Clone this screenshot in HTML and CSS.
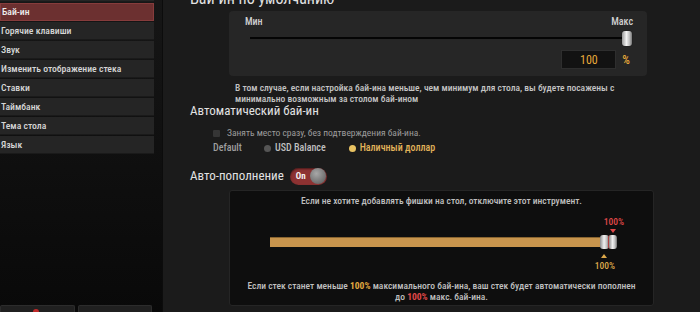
FILE: index.html
```html
<!DOCTYPE html>
<html lang="ru">
<head>
  <meta charset="UTF-8">
  <title>Настройки</title>
  <link rel="stylesheet" href="styles.css">
</head>
<body>

  <!-- Left menu -->
  <aside class="sidebar">
    <nav class="menu">
      <div class="menu-item"></div>
      <a href="#" class="menu-item active">Бай-ин</a>
      <a href="#" class="menu-item">Горячие клавиши</a>
      <a href="#" class="menu-item">Звук</a>
      <a href="#" class="menu-item">Изменить отображение стека</a>
      <a href="#" class="menu-item">Ставки</a>
      <a href="#" class="menu-item">Таймбанк</a>
      <a href="#" class="menu-item">Тема стола</a>
      <a href="#" class="menu-item">Язык</a>
    </nav>
    <div class="side-buttons">
      <button class="side-btn"><span class="dot"></span></button>
      <button class="side-btn"></button>
    </div>
  </aside>

  <!-- Settings content -->
  <main class="content">
    <h2 class="section-title first">Бай-ин по умолчанию</h2>

    <div class="card">
      <div class="range-labels">
        <span>Мин</span>
        <span>Макс</span>
      </div>
      <div class="track">
        <div class="thumb"></div>
      </div>
      <div class="value-row">
        <div class="value-box">100</div>
        <span class="percent">%</span>
      </div>
    </div>

    <p class="note">В том случае, если настройка бай-ина меньше, чем минимум для стола, вы будете посажены с<br>минимально возможным за столом бай-ином</p>

    <h2 class="section-title">Автоматический бай-ин</h2>

    <label class="check-row">
      <span class="checkbox"></span>
      Занять место сразу, без подтверждения бай-ина.
    </label>

    <div class="radio-row">
      <span class="radio-label">Default</span>
      <span class="radio"><span class="radio-dot"></span>USD Balance</span>
      <span class="radio selected"><span class="radio-dot"></span>Наличный доллар</span>
    </div>

    <div class="toggle-row">
      <h2 class="section-title">Авто-пополнение</h2>
      <div class="toggle">
        <span class="toggle-text">On</span>
        <span class="knob"></span>
      </div>
    </div>

    <div class="refill-card">
      <p class="refill-hint">Если не хотите добавлять фишки на стол, отключите этот инструмент.</p>
      <div class="refill-range">
        <div class="bar"></div>
        <div class="marker top">100%</div>
        <div class="marker bottom">100%</div>
        <div class="knobs">
          <span class="pill"></span>
          <span class="pill"></span>
        </div>
      </div>
      <p class="refill-text">Если стек станет меньше <b class="gold">100%</b> максимального бай-ина, ваш стек будет автоматически пополнен<br>до <b class="red">100%</b> макс. бай-ина.</p>
    </div>
  </main>

</body>
</html>
```

FILE: styles.css
```css
* {
  margin: 0;
  padding: 0;
  box-sizing: border-box;
}

body {
  font-family: Roboto, "Liberation Sans", sans-serif;
  font-stretch: 75%;
  width: 700px;
  height: 312px;
  overflow: hidden;
  display: flex;
  background: #0b0b0b;
  color: #dcdcdc;
}

/* sidebar */

.sidebar {
  width: 163px;
  flex-shrink: 0;
  display: flex;
  flex-direction: column;
  justify-content: space-between;
  background: linear-gradient(#161616, #090909);
  border-right: 1px solid #0c0c0c;
}

.menu {
  display: flex;
  flex-direction: column;
  gap: 1px;
  width: 154px;
  margin-top: -16px;
}

.menu-item {
  display: block;
  height: 18px;
  line-height: 18px;
  padding-left: 1px;
  font-size: 9.7px;
  font-weight: 500;
  color: #d6d6d6;
  text-decoration: none;
  background: #252525;
  border-bottom: 1px solid #1a1a1a;
}

.menu-item.active {
  background: #6c3030;
  border: 1px solid #863c3c;
  line-height: 16px;
  color: #eee;
}

.side-buttons {
  display: flex;
  gap: 3px;
  height: 7px;
  width: 152px;
}

.side-btn {
  flex: 1;
  background: #202020;
  border: 1px solid #2c2c2c;
  border-bottom: none;
  border-radius: 2px 2px 0 0;
  position: relative;
}

.side-btn .dot {
  position: absolute;
  left: 32px;
  top: 3px;
  width: 6px;
  height: 6px;
  border-radius: 50%;
  background: #c02a2a;
}

/* content */

.content {
  flex: 1;
  background: #1b1b1b;
  padding-left: 27px;
  display: flex;
  flex-direction: column;
  align-items: flex-start;
}

.section-title {
  font-size: 13px;
  font-weight: 400;
  line-height: 18px;
  color: #e2e2e2;
}

.section-title.first {
  font-size: 16px;
  margin-top: -10px;
}

.card {
  width: 418px;
  height: 65px;
  margin: 3px 0 0 39px;
  background: #262626;
  border-radius: 4px;
  padding: 5px 14px 0 16px;
}

.range-labels {
  display: flex;
  justify-content: space-between;
  font-size: 10px;
  font-weight: 500;
  line-height: 12px;
  color: #cfcfcf;
}

.track {
  position: relative;
  height: 2px;
  margin: 9px 6px 0 5px;
  background: #050505;
}

.thumb {
  position: absolute;
  right: -5px;
  top: -6px;
  width: 10px;
  height: 15px;
  border-radius: 3px;
  background: linear-gradient(90deg, #9a9a9a, #f2f2f2 45%, #bdbdbd 75%, #777);
  box-shadow: 0 0 1px #000;
}

.value-row {
  display: flex;
  justify-content: flex-end;
  align-items: center;
  gap: 6px;
  margin-top: 11px;
}

.value-box {
  width: 55px;
  height: 19px;
  line-height: 18px;
  background: #121212;
  border: 1px solid #2e2e2e;
  color: #e7a93a;
  font-size: 12px;
  text-align: center;
}

.percent {
  color: #e7a93a;
  font-size: 12px;
  font-weight: 500;
  margin-right: 3px;
}

.note {
  margin: 6px 0 0 45px;
  font-size: 9.5px;
  font-weight: 500;
  line-height: 11px;
  color: #c4c4c4;
}

.note + .section-title {
  margin-top: -2px;
}

.check-row {
  display: flex;
  align-items: center;
  gap: 7px;
  margin: 6px 0 0 23px;
  font-size: 9.5px;
  line-height: 14px;
  color: #9c9c9c;
}

.checkbox {
  width: 7px;
  height: 7px;
  border-radius: 1px;
  background: #353535;
}

.radio-row {
  display: flex;
  align-items: center;
  margin: 0 0 0 23px;
  font-size: 10px;
  font-weight: 500;
  line-height: 16px;
  color: #c0c0c0;
}

.radio-label {
  color: #9e9e9e;
  width: 51px;
}

.radio {
  display: flex;
  align-items: center;
  gap: 4px;
  margin-right: 23px;
}

.radio-dot {
  width: 7px;
  height: 7px;
  border-radius: 50%;
  background: #555;
}

.radio.selected {
  color: #e2b45a;
}

.radio.selected .radio-dot {
  background: #e8c262;
}

.toggle-row {
  display: flex;
  align-items: center;
  gap: 6px;
  margin-top: 11px;
}

.toggle {
  display: flex;
  align-items: center;
  justify-content: space-between;
  width: 37px;
  height: 17px;
  border-radius: 9px;
  background: #8d3232;
  box-shadow: inset 0 1px 2px rgba(0, 0, 0, 0.5);
  padding-left: 6px;
}

.toggle-text {
  font-size: 9px;
  font-weight: 700;
  color: #f4f4f4;
}

.knob {
  width: 16px;
  height: 16px;
  margin-right: 0.5px;
  border-radius: 50%;
  background: radial-gradient(circle at 40% 35%, #a8a8a8, #6e6e6e 70%, #555);
}

.refill-card {
  width: 425px;
  height: 116px;
  margin: 5px 0 0 39px;
  background: #0e0e0e;
  border: 1px solid #252525;
  border-radius: 3px;
  text-align: center;
  font-size: 9.5px;
  font-weight: 500;
  color: #bfbfbf;
}

.refill-hint {
  margin-top: 4px;
  line-height: 12px;
}

.refill-range {
  position: relative;
  height: 73px;
  margin: 0 53px 0 40px;
}

.bar {
  position: absolute;
  left: 0;
  right: 0;
  top: 30px;
  height: 10px;
  background: #c8954d;
  border-top: 1px solid #8a6530;
}

.marker {
  position: absolute;
  font-size: 9.5px;
  line-height: 11px;
}

.marker.top {
  right: -24px;
  top: 9px;
  color: #e04848;
}

.marker.top::after {
  content: "";
  position: absolute;
  left: 6px;
  top: 13px;
  border: 3px solid transparent;
  border-top: 4px solid #e04848;
}

.marker.bottom {
  right: -15px;
  top: 53px;
  color: #dca84a;
}

.marker.bottom::before {
  content: "";
  position: absolute;
  left: 6px;
  top: -9px;
  border: 3px solid transparent;
  border-bottom: 4px solid #dca84a;
}

.knobs {
  position: absolute;
  right: -17px;
  top: 28px;
  display: flex;
}

.pill {
  width: 9px;
  height: 14px;
  border-radius: 3px;
  background: linear-gradient(90deg, #8d8d8d, #f0f0f0 45%, #c0c0c0 75%, #6e6e6e);
}

.pill + .pill {
  margin-left: -1px;
  border-left: 1px solid #b04040;
}

.refill-text {
  line-height: 11px;
}

.gold {
  color: #e0a840;
}

.red {
  color: #e04848;
}
```
